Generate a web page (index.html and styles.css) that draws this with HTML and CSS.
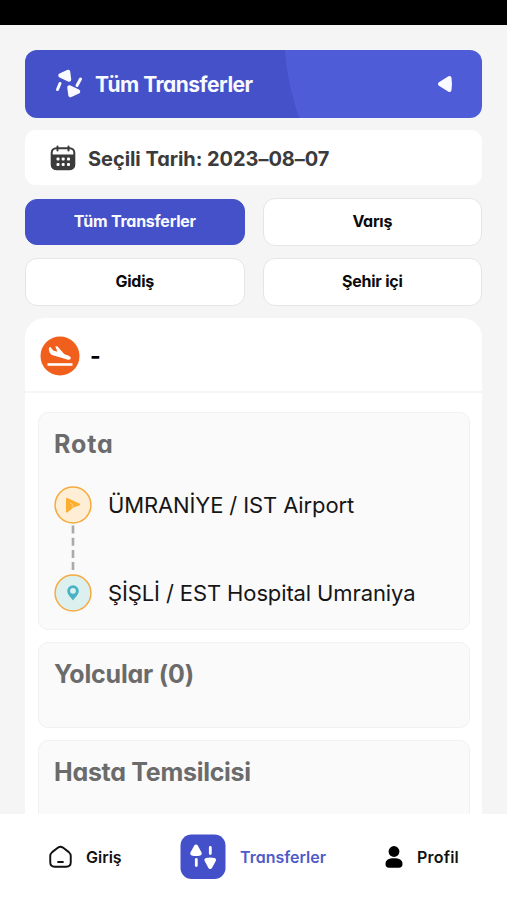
FILE: index.html
```html
<!DOCTYPE html>
<html lang="tr">
<head>
<meta charset="utf-8">
<meta name="viewport" content="width=device-width, initial-scale=1">
<title>Transferler</title>
<link rel="stylesheet" href="styles.css">
</head>
<body>
<div class="app">
  <div class="status-bar"></div>
  <main class="content">
    <header class="banner">
      <svg class="banner-icon" viewBox="0 0 28 34" fill="currentColor" stroke="currentColor" stroke-linejoin="round" stroke-linecap="round">
        <path d="M5.500 8.500 13 5l1 7.500Z" stroke-width="4.500"/>
        <path d="M23 24.500 15.500 28l-1-7.500Z" stroke-width="4.500"/>
        <path d="M5 16.500 2.500 22.500M25.500 12 22 18.500" fill="none" stroke-width="3"/>
      </svg>
      <h1 class="banner-title">Tüm Transferler</h1>
      <svg class="banner-back" viewBox="0 0 16 18" fill="currentColor" stroke="currentColor" stroke-width="4" stroke-linejoin="round"><path d="M3 9 12.500 3q1 6 0 12Z"/></svg>
    </header>
    <div class="date">
      <svg class="date-icon" viewBox="0 0 26 26">
        <rect x="1.700" y="3.200" width="22.600" height="21" rx="4.500" fill="none" stroke="#3b3b3b" stroke-width="2"/>
        <path d="M1 9.500h24v10a5.500 5.500 0 0 1-5.500 5.500h-13A5.500 5.500 0 0 1 1 19.500Z" fill="#3b3b3b"/>
        <path d="M7.500 1.500v4M18.500 1.500v4" stroke="#3b3b3b" stroke-width="2" stroke-linecap="round"/>
        <g fill="#fff"><rect x="6.500" y="12.500" width="3" height="3" rx="1"/><rect x="11.700" y="12.500" width="3" height="3" rx="1"/><rect x="17" y="12.500" width="3" height="3" rx="1"/><rect x="6.500" y="18" width="3" height="3" rx="1"/><rect x="11.700" y="18" width="3" height="3" rx="1"/><rect x="17" y="18" width="3" height="3" rx="1"/></g>
      </svg>
      <span class="date-text">Seçili Tarih: 2023–08–07</span>
    </div>
    <div class="tabs">
      <button class="tab tab-active">Tüm Transferler</button>
      <button class="tab">Varış</button>
      <button class="tab">Gidiş</button>
      <button class="tab">Şehir içi</button>
    </div>
    <article class="card">
      <div class="card-head">
        <svg class="landing" viewBox="0 0 40 40">
          <circle cx="20" cy="20" r="19.500" fill="#f0601c"/>
          <path d="M9 11.500 10.500 11l2.700 3.400 4.200 1.400-2.100-5.500 2.300.2 6.500 7.500 5.100 2c1.700.9 1.900 2 1.300 3-.5.800-1.800 1-3.200.6l-14.500-4.400C9.500 17.900 8.500 14.800 9 11.500Z" fill="#fff"/>
          <path d="M7.500 28.500h25" stroke="#fff" stroke-width="2.600"/>
        </svg>
        <span class="dash">-</span>
      </div>
      <div class="card-body">
        <section class="panel panel-route">
          <h2 class="panel-title title-route">Rota</h2>
          <div class="route">
            <div class="stop">
              <svg class="stop-icon" viewBox="0 0 38 38"><circle cx="19" cy="19" r="17.900" fill="#fdeed5" stroke="#f5ab40" stroke-width="1.500"/><path d="M13 13 25 18.500 19 20.500 13 25.500Z" fill="#fcae2c" stroke="#fcae2c" stroke-width="2" stroke-linejoin="round"/><path d="m16 17 2.500 1.500-.5 3" fill="none" stroke="#fdd28b" stroke-width="1"/></svg>
              <span class="place place-from">ÜMRANİYE / IST Airport</span>
            </div>
            <svg class="connector" viewBox="0 0 4 50"><path d="M2 1.500v48" stroke="#aaa" stroke-width="2.600" stroke-dasharray="8 4.200"/></svg>
            <div class="stop">
              <svg class="stop-icon" viewBox="0 0 38 38"><circle cx="19" cy="19" r="17.900" fill="#ddf0f0" stroke="#f5ab40" stroke-width="1.500"/><path fill-rule="evenodd" d="M19 26.500C17 23.500 13.200 20.500 13.200 17A5.800 5.800 0 0 1 24.800 17C24.800 20.500 21 23.500 19 26.500ZM19 13.900a2.900 2.900 0 1 0 0 5.800 2.900 2.900 0 0 0 0-5.800Z" fill="#49b2c4"/></svg>
              <span class="place place-to">ŞİŞLİ / EST Hospital Umraniya</span>
            </div>
          </div>
        </section>
        <section class="panel panel-passengers"><h2 class="panel-title title-passengers">Yolcular (0)</h2></section>
        <section class="panel panel-agent"><h2 class="panel-title title-agent">Hasta Temsilcisi</h2></section>
      </div>
    </article>
  </main>
  <nav class="nav">
    <a class="nav-item">
      <svg class="nav-home" viewBox="0 0 24 24" fill="none" stroke="#111" stroke-width="2" stroke-linecap="round" stroke-linejoin="round"><path d="M9.500 2.200 3.300 6.900C2 8 1.300 9.200 1.300 11v6.500c0 3 1.700 4.700 4.700 4.700h12c3 0 4.700-1.700 4.700-4.700V11c0-1.800-.7-3-2-4.100l-6.200-4.700c-1.700-1.200-3.300-1.200-5 0Z"/><path d="M9.500 17.300h5"/></svg>
      <span class="nav-label label-home">Giriş</span>
    </a>
    <a class="nav-item">
      <svg class="nav-transfer" viewBox="0 0 46 46">
        <rect x=".5" y=".5" width="45" height="44.500" rx="11" fill="#4350c9"/>
        <g fill="#fff" stroke="#fff" stroke-linejoin="round" stroke-linecap="round"><path d="M16 12.500 12.200 19.500q3.800 1 7.600 0Z" stroke-width="4"/><path d="M30.200 33 26.400 26q3.800-1 7.600 0Z" stroke-width="4"/><path d="M16.300 25.500v6M30.300 13.500v6" stroke-width="2.800"/></g>
      </svg>
      <span class="nav-label label-transfer">Transferler</span>
    </a>
    <a class="nav-item">
      <svg class="nav-profile" viewBox="0 0 18 24"><circle cx="9" cy="6.500" r="5.400" fill="#000"/><path d="M.5 19c0-4 3.200-5.700 8.500-5.700s8.500 1.700 8.500 5.700c0 2.600-1.200 3.700-3.600 3.700H4.100C1.700 22.700.5 21.600.5 19Z" fill="#000"/></svg>
      <span class="nav-label label-profile">Profil</span>
    </a>
  </nav>
</div>
</body>
</html>
```
FILE: styles.css
```css
* { box-sizing: border-box; }
body { margin: 0; background: #f5f5f5; font-family: Inter, "Noto Sans", sans-serif; }
h1, h2 { margin: 0; }
svg { display: block; flex: none; }
.app { height: 900px; display: flex; flex-direction: column; overflow: hidden; }
.status-bar { flex: none; height: 25px; background: #000; }
.content { flex: 1; min-height: 0; overflow: hidden; padding: 25px 25px 0; display: flex; flex-direction: column; }
.banner, .date, .tab, .panel-title, .nav-label { font-feature-settings: "cv11"; white-space: nowrap; }
.banner { flex: none; height: 68px; border-radius: 12px; display: flex; align-items: center; padding: 0 29px 0 30px; color: #f9faff; background: radial-gradient(circle at 501px -16px, #4f5cd8 241px, #4451c9 242px); }
.banner-icon { width: 28px; height: 34px; }
.banner-title { flex: 1; margin-left: 12px; padding-top: 1px; font-size: 21px; line-height: 26px; font-weight: 700; letter-spacing: -.5px; }
.banner-back { width: 16px; height: 18px; }
.date { flex: none; height: 55px; margin-top: 12px; border-radius: 11px; background: #fff; display: flex; align-items: center; padding: 1px 25px 0; }
.date-icon { width: 26px; height: 26px; }
.date-text { margin-left: 12px; padding-top: 1px; font-size: 20px; line-height: 26px; font-weight: 650; letter-spacing: -.05px; color: #3b3b3b; }
.tabs { flex: none; margin-top: 12.500px; display: grid; grid-template-columns: 1fr 1fr; grid-auto-rows: 48px; gap: 12px 18px; }
.tab { border: 1.500px solid #e5e5e5; border-radius: 12px; background: #fff; padding: 0 0 1px; font-family: inherit; font-size: 16px; font-weight: 700; letter-spacing: -.25px; color: #0b0b0b; }
.tab-active { height: 46px; margin-top: 1px; background: #4451c9; border-color: #4451c9; color: #f9faff; }
.card { flex: none; margin-top: 12.500px; border-radius: 20px 20px 0 0; background: #fff; }
.card-head { height: 75px; display: flex; align-items: center; padding: 3px 14px 0 15px; border-bottom: 2px solid #f5f5f5; }
.landing { width: 40px; height: 40px; }
.dash { margin-left: 10px; font-size: 23px; font-weight: 700; line-height: 28px; }
.card-body { padding: 19px 12.500px 0 13px; display: flex; flex-direction: column; gap: 12px; }
.panel { border: 1.500px solid #f1f1f1; border-radius: 10px; background: #fafafa; padding: 15px 15px 0; }
.panel-route { height: 218px; }
.panel-passengers { height: 86px; }
.panel-agent { height: 130px; }
.panel-title { font-size: 25px; line-height: 32px; font-weight: 700; color: #6b6b6b; letter-spacing: -.2px; }
.title-route { letter-spacing: .9px; }
.title-agent { letter-spacing: -.28px; }
.route { margin-top: 26px; }
.stop { display: flex; align-items: center; gap: 16px; height: 38px; }
.stop-icon { width: 38px; height: 38px; }
.connector { width: 4px; height: 50px; margin-left: 17px; }
.place { font-size: 22px; line-height: 28px; letter-spacing: -.12px; color: #161616; white-space: nowrap; }
.nav { flex: none; height: 86px; background: #fff; display: grid; grid-template-columns: 131px 195px 1fr; column-gap: 0; padding-left: 49px; }
.nav-item { display: flex; align-items: center; }
.nav-home { width: 23px; height: 24px; }
.nav-transfer { width: 46px; height: 46px; }
.nav-profile { width: 18px; height: 24px; margin-left: 10px; }
.nav-label { font-size: 16px; line-height: 22px; font-weight: 600; margin-left: 14px; color: #111; }
.label-transfer { color: #4f5bc8; }
.label-profile { letter-spacing: .2px; }
```
